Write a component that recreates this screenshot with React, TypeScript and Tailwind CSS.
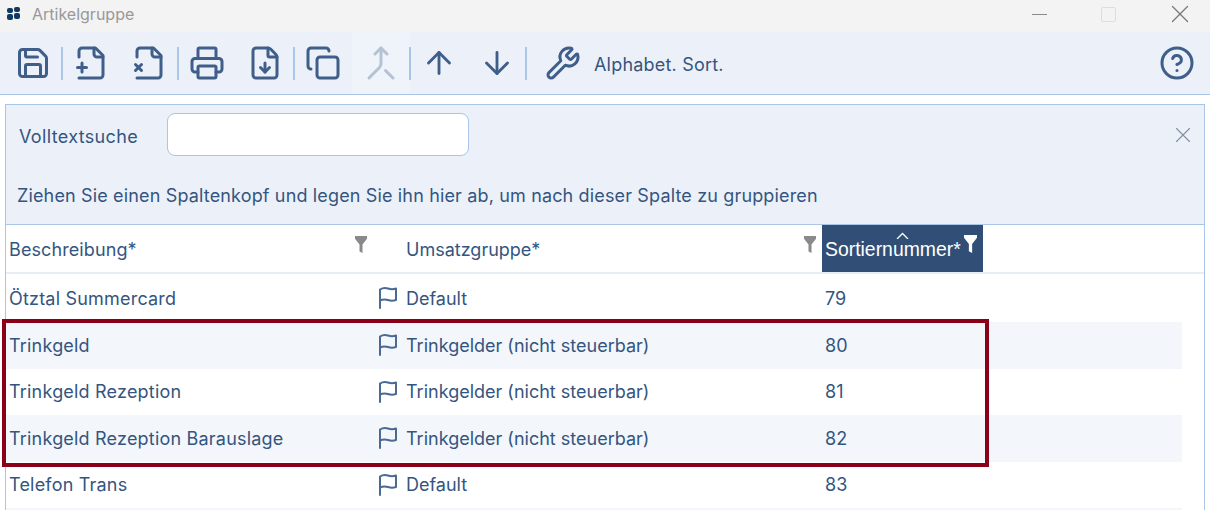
import { ArrowDown, ArrowUp, CircleHelp, Copy, FileDown, Merge, Printer, Save, Wrench, X } from "lucide-react";

const ROWS = [
  { name: "Ötztal Summercard", group: "Default", sort: 79 },
  { name: "Trinkgeld", group: "Trinkgelder (nicht steuerbar)", sort: 80 },
  { name: "Trinkgeld Rezeption", group: "Trinkgelder (nicht steuerbar)", sort: 81 },
  { name: "Trinkgeld Rezeption Barauslage", group: "Trinkgelder (nicht steuerbar)", sort: 82 },
  { name: "Telefon Trans", group: "Default", sort: 83 },
];

function Sep() {
  return <div className="-mx-px h-[33px] w-[2px] shrink-0 bg-[#a9c5e8]" />;
}

function ToolBtn({ children, muted }: { children: React.ReactNode; muted?: boolean }) {
  return (
    <button type="button" className={`flex h-[62px] w-[58px] shrink-0 items-center justify-center ${muted ? "bg-[#eff3fa] text-[#b4c2d3]" : "text-[#3f5f8a]"}`}>
      {children}
    </button>
  );
}

// file outline with the mark sitting in the gap at the lower left
function FileMark({ mark }: { mark: string }) {
  return (
    <svg viewBox="0 0 24 24" className="h-9 w-9" fill="none" stroke="currentColor" strokeWidth="2" strokeLinecap="round" strokeLinejoin="round">
      <path d="M4 22h14a2 2 0 0 0 2-2V7l-5-5H6a2 2 0 0 0-2 2v4" />
      <path d="M14 2v4a2 2 0 0 0 2 2h4" />
      <path d={mark} />
    </svg>
  );
}

function Funnel({ className }: { className: string }) {
  return (
    <svg viewBox="0 0 12 16" preserveAspectRatio="none" className={className} fill="currentColor">
      <path d="M0 0h12v2.5L7.5 8v8l-3-1.5V8L0 2.5z" />
    </svg>
  );
}

function RowFlag() {
  return (
    <svg viewBox="0 0 20 24" className="h-6 w-5 shrink-0 text-[#4a6a94]" fill="none" stroke="currentColor" strokeWidth="2" strokeLinecap="round" strokeLinejoin="round">
      <path d="M2 22V3.500c3-2 5-2 8-1s5 1 8 0V14c-3 1-5 1-8 0s-5-1-8 .5" />
    </svg>
  );
}

export default function App() {
  return (
    <div className="relative h-[510px] w-[1210px] overflow-hidden bg-white font-['Inter',sans-serif] text-[18px] text-[#34557f]">
      {/* title bar */}
      <div className="flex h-8 items-center bg-[#f3f3f3] pb-1">
        <svg viewBox="0 0 14 14" className="ml-[7px] h-[14px] w-[14px] text-[#0f3a63]" fill="currentColor">
          <rect x="0" y="1" width="6" height="5" rx="2" />
          <rect x="7" y="0" width="6" height="5" rx="2" />
          <rect x="0" y="7" width="6" height="6" rx="2" />
          <rect x="7" y="6" width="6" height="6" rx="2" />
        </svg>
        <span className="ml-[11px] text-[16px] text-[#999999]">Artikelgruppe</span>
        <div className="ml-auto flex items-center">
          <div className="h-px w-[15px] bg-[#8a8a8a]" />
          <div className="ml-[54px] h-[15px] w-[15px] rounded-[2px] border border-[#dddddd]" />
          <X className="ml-[49px] mr-[15px] h-[30px] w-[30px] text-[#777777]" strokeWidth={1} />
        </div>
      </div>

      {/* toolbar */}
      <div className="flex h-[63px] items-center border-b border-[#a9c5e8] bg-[#ecf1f9] pl-1">
        <ToolBtn><Save size={36} strokeWidth={2} /></ToolBtn>
        <Sep />
        <ToolBtn><FileMark mark="M3 15h6M6 12v6" /></ToolBtn>
        <ToolBtn><FileMark mark="m7 13-4 4M3 13l4 4" /></ToolBtn>
        <Sep />
        <ToolBtn><Printer size={36} strokeWidth={2} /></ToolBtn>
        <ToolBtn><FileDown size={36} strokeWidth={2} /></ToolBtn>
        <Sep />
        <ToolBtn><Copy size={36} strokeWidth={2} /></ToolBtn>
        <ToolBtn muted><Merge size={36} strokeWidth={2} /></ToolBtn>
        <Sep />
        <ToolBtn><ArrowUp size={36} strokeWidth={1.9} /></ToolBtn>
        <ToolBtn><ArrowDown size={36} strokeWidth={1.9} /></ToolBtn>
        <Sep />
        <div className="ml-2"><ToolBtn><Wrench size={36} strokeWidth={2} /></ToolBtn></div>
        <span className="ml-[2px] pt-[2px] tracking-[0.2px]">Alphabet. Sort.</span>
        <CircleHelp size={36} strokeWidth={2} className="ml-auto mr-[15px] text-[#3f5f8a]" />
      </div>

      {/* grid panel */}
      <div className="mx-[5px] mt-[9px] w-[1200px] border border-[#a9c5e8]">
        <div className="h-[120px] border-b border-[#a9c5e8] bg-[#ecf1f9]">
          <div className="flex items-center pt-2">
            <span className="ml-[13px] w-[148px] pt-[3px] tracking-[0.35px]">Volltextsuche</span>
            <input className="h-[43px] w-[302px] rounded-[8px] border border-[#a9c5e8] bg-white" />
            <X className="ml-auto mr-[8px] h-[26px] w-[26px] text-[#84909f]" strokeWidth={1} />
          </div>
          <p className="ml-[11px] mt-[26px] tracking-[0.15px]">Ziehen Sie einen Spaltenkopf und legen Sie ihn hier ab, um nach dieser Spalte zu gruppieren</p>
        </div>

        <div className="flex h-[49px] border-b-2 border-[#e6edf7]">
          <div className="flex w-[400px] items-center justify-between pl-[3px] pr-[39px]">
            <span className="pt-[2px] tracking-[0.1px]">Beschreibung*</span>
            <Funnel className="mb-[9px] h-[17px] w-3 text-[#8a8a8a]" />
          </div>
          <div className="flex w-[416px] items-center justify-between pr-[6px]">
            <span className="pt-[2px]">Umsatzgruppe*</span>
            <Funnel className="mb-[9px] h-[17px] w-3 text-[#8a8a8a]" />
          </div>
          <div className="relative flex w-[161px] items-center bg-[#314f76] pl-[3px] font-['Liberation_Sans',sans-serif] text-[19.4px] text-white">
            <span className="pt-[2px]">Sortiernummer*</span>
            <svg viewBox="0 0 13 7" className="absolute left-[74px] top-[7px] h-[7px] w-[13px]" fill="none" stroke="currentColor" strokeWidth="1.3">
              <path d="M1 7l5.500-5.500L12 7" />
            </svg>
            <Funnel className="absolute left-[142px] top-[10px] h-[18px] w-[13px] text-white" />
          </div>
        </div>

        <div className="w-[1176px]">
          {ROWS.map((r, i) => (
            <div key={r.sort} className={`flex items-center ${i === 0 ? "h-[48px]" : "h-[46.5px]"} ${i % 2 === 1 ? "bg-[#f3f6fb]" : "bg-white"}`}>
              <div className="flex w-[400px] items-center justify-between pl-[3px] pr-2">
                <span className="tracking-[0.2px]">{r.name}</span>
                <RowFlag />
              </div>
              <span className="w-[419px]">{r.group}</span>
              <span>{r.sort}</span>
            </div>
          ))}
          <div className="h-[10px] bg-[#f3f6fb]" />
        </div>
      </div>

      {/* red highlight drawn over the screenshot */}
      <div className="absolute left-[2px] top-[319px] h-[148px] w-[987px] border-4 border-[#8a0019]" />
    </div>
  );
}
